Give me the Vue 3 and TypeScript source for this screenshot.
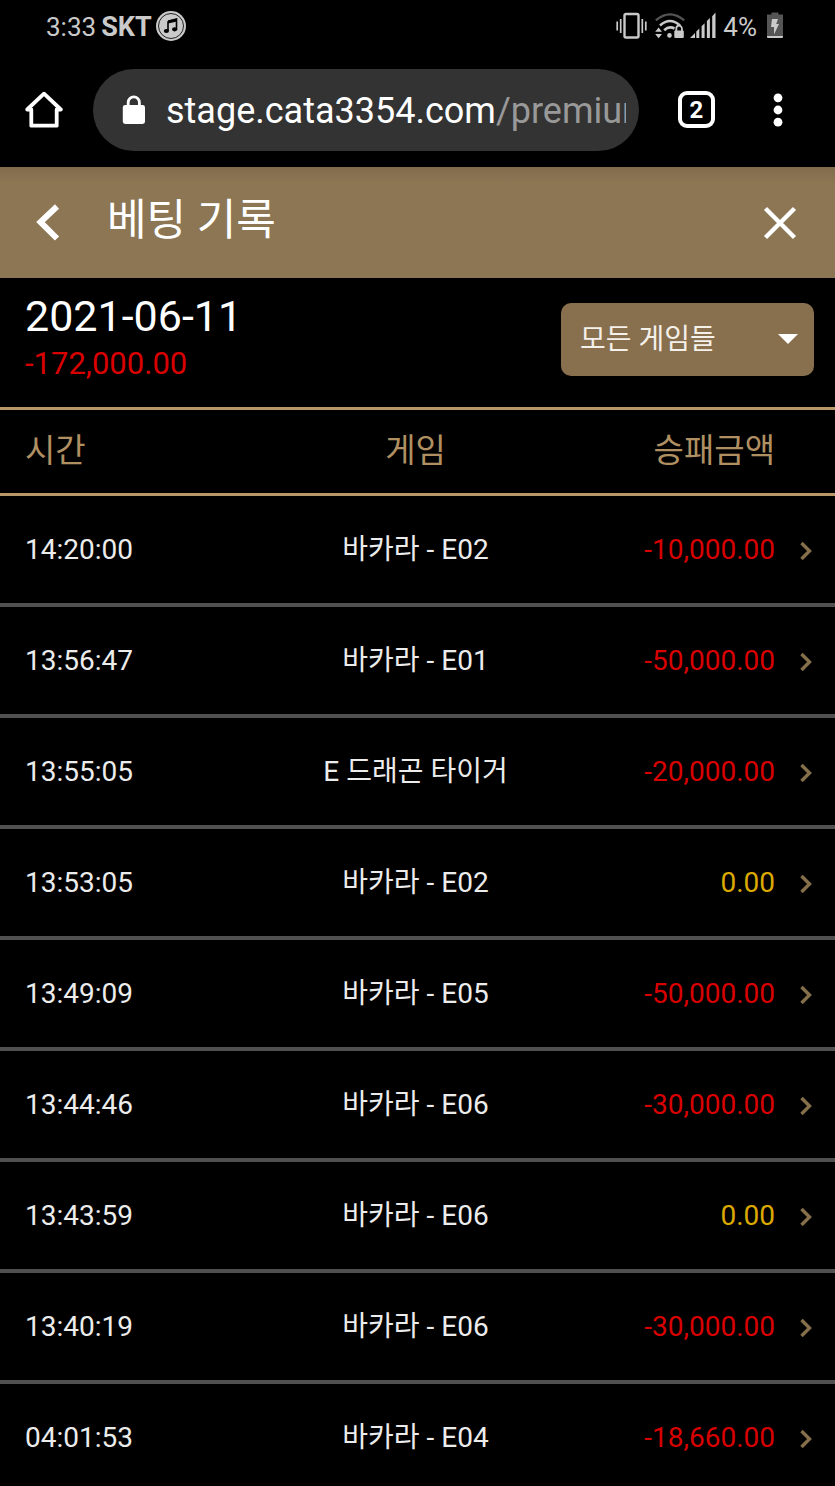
<script setup lang="ts">
import { ref } from 'vue'

interface Bet {
  time: string
  game: string
  result: string
}

const bets: Bet[] = [
  { time: '14:20:00', game: '바카라 - E02', result: '-10,000.00' },
  { time: '13:56:47', game: '바카라 - E01', result: '-50,000.00' },
  { time: '13:55:05', game: 'E 드래곤 타이거', result: '-20,000.00' },
  { time: '13:53:05', game: '바카라 - E02', result: '0.00' },
  { time: '13:49:09', game: '바카라 - E05', result: '-50,000.00' },
  { time: '13:44:46', game: '바카라 - E06', result: '-30,000.00' },
  { time: '13:43:59', game: '바카라 - E06', result: '0.00' },
  { time: '13:40:19', game: '바카라 - E06', result: '-30,000.00' },
  { time: '04:01:53', game: '바카라 - E04', result: '-18,660.00' },
]

const filter = ref('all')
</script>

<template>
  <div class="screen">
    <div class="status">
      <div class="status-group">
        <span class="clock">3:33</span>
        <strong class="carrier">SKT</strong>
        <svg class="music" width="30" height="30" viewBox="0 0 30 30" aria-hidden="true">
          <circle cx="15" cy="15" r="15" fill="#cacaca" />
          <circle cx="15" cy="15" r="12.5" fill="none" stroke="#222" stroke-width="1" />
          <path d="M12 10.2 20.5 8v10.5M12 10.2V20" fill="none" stroke="#000" stroke-width="1.6" />
          <path d="M12 9.5 21 7.5v3L12 12.5z" fill="#000" />
          <ellipse cx="10.4" cy="20" rx="2.6" ry="2.1" fill="#000" />
          <ellipse cx="18.6" cy="18.3" rx="2.6" ry="2.1" fill="#000" />
        </svg>
      </div>
      <div class="status-group">
        <svg class="vibrate" width="32" height="28" viewBox="0 0 32 28" aria-hidden="true">
          <rect x="8.5" y="2" width="14" height="23.5" rx="1.5" fill="none" stroke="#cacaca" stroke-width="2.4" />
          <path d="M1.2 9.5v9M4.7 7v14M26.3 7v14M29.8 9.5v9" stroke="#cacaca" stroke-width="1.7" />
        </svg>
        <svg class="wifi" width="30" height="28" viewBox="0 0 30 28" aria-hidden="true">
          <path d="M.8 8.4Q15-3.6 29.2 8.4" fill="none" stroke="#555" stroke-width="2.2" />
          <path d="M5 13.4Q15 4.6 25 13.4" fill="none" stroke="#cacaca" stroke-width="2.6" />
          <path d="M9.2 18.2Q14 13.6 19.5 16.5" fill="none" stroke="#cacaca" stroke-width="2.6" />
          <circle cx="14.5" cy="23.4" r="2.3" fill="#cacaca" />
          <path d="M3.6 15.5 7 19.7H.2zM3.6 26.2 7 22H.2z" fill="#cacaca" />
          <path d="M21.3 19v-2.5a2.8 2.8 0 0 1 5.6 0V19" fill="none" stroke="#cacaca" stroke-width="1.8" />
          <rect x="19.3" y="18.5" width="9.5" height="7.5" rx="1" fill="#cacaca" />
        </svg>
        <svg class="signal" width="26" height="28" viewBox="0 0 26 28" aria-hidden="true">
          <path d="M0 26 5 21v5zM6.3 19.5l3-3V26h-3zM11.6 14.2l3-3V26h-3zM16.9 8.9l3-3V26h-3zM22.2 4.3l3.3-3.8V26h-3.3z" fill="#cacaca" />
        </svg>
        <span class="percent">4%</span>
        <svg class="battery" width="16" height="28" viewBox="0 0 16 28" aria-hidden="true">
          <path d="M4.5.5h7v2H16V24H0V2.5h4.5z" fill="#555" />
          <path d="M0 24h16v1.2l-.8.8H.8L0 25.2z" fill="#cacaca" />
          <path d="M5 7h6l-1.8 5H12L7 22.5V15H4z" fill="#cacaca" />
        </svg>
      </div>
    </div>

    <div class="browser">
      <button class="icon-button" type="button" aria-label="Home">
        <svg width="38" height="38" viewBox="0 0 38 38" aria-hidden="true">
          <path d="M2.2 18.5 19 2.7l16.8 15.8H31.7V34.7H6.3V18.5z" fill="none" stroke="#fff" stroke-width="3.8" stroke-linejoin="round" />
        </svg>
      </button>
      <button class="address" type="button">
        <svg class="lock" width="24" height="30" viewBox="0 0 24 30" aria-hidden="true">
          <path d="M6.2 12V7.5a5.6 5.6 0 0 1 11.2 0V12" fill="none" stroke="#fff" stroke-width="2.8" />
          <rect x=".8" y="10" width="22.2" height="19" rx="2.4" fill="#fff" />
        </svg>
        <span class="url">stage.cata3354.com<span class="path">/premium</span></span>
      </button>
      <button class="tabs" type="button" aria-label="Tabs">2</button>
      <button class="icon-button more" type="button" aria-label="Menu">
        <svg width="10" height="34" viewBox="0 0 10 34" aria-hidden="true">
          <circle cx="5" cy="4.8" r="4.4" fill="#fff" />
          <circle cx="5" cy="17" r="4.4" fill="#fff" />
          <circle cx="5" cy="29.2" r="4.4" fill="#fff" />
        </svg>
      </button>
    </div>

    <header class="title-bar">
      <button class="icon-button" type="button" aria-label="뒤로">
        <svg width="24" height="38" viewBox="0 0 24 38" aria-hidden="true">
          <path d="M21 2.5 4.5 18 21 34.5" fill="none" stroke="#fff" stroke-width="6" />
        </svg>
      </button>
      <h1>베팅 기록</h1>
      <button class="icon-button" type="button" aria-label="닫기">
        <svg width="34" height="34" viewBox="0 0 34 34" aria-hidden="true">
          <path d="m2.5 2.5 29 29M31.5 2.5l-29 29" stroke="#fff" stroke-width="4.4" />
        </svg>
      </button>
    </header>

    <main>
      <section class="summary">
        <div>
          <div class="date">2021-06-11</div>
          <div class="total">-172,000.00</div>
        </div>
        <div class="filter">
          <select v-model="filter" aria-label="게임">
            <option value="all">모든 게임들</option>
          </select>
          <svg class="caret" width="20" height="10" viewBox="0 0 20 10" aria-hidden="true">
            <path d="M0 0h20L10 10z" fill="#fff" />
          </svg>
        </div>
      </section>

      <table>
        <thead>
          <tr>
            <th class="time" scope="col">시간</th>
            <th class="game" scope="col">게임</th>
            <th class="result" scope="col">승패금액</th>
            <td class="open"></td>
          </tr>
        </thead>
        <tbody>
          <tr v-for="bet in bets" :key="bet.time">
            <td class="time">{{ bet.time }}</td>
            <td class="game">{{ bet.game }}</td>
            <td class="result" :class="bet.result.startsWith('-') ? 'loss' : 'even'">{{ bet.result }}</td>
            <td class="open">
              <button class="icon-button" type="button" :aria-label="`${bet.time} 상세`">
                <svg width="12" height="20" viewBox="0 0 12 20" aria-hidden="true">
                  <path d="m1.5 3 8 8-8 8" fill="none" stroke="#86704c" stroke-width="3.4" />
                </svg>
              </button>
            </td>
          </tr>
        </tbody>
      </table>
    </main>
  </div>
</template>

<style>
body {
  margin: 0;
  background: #000;
}
</style>

<style scoped>
.screen {
  min-height: 100vh;
  overflow: hidden;
  background: #000;
  color: #ececec;
  font-family: Roboto, "Noto Sans CJK KR", sans-serif;
  font-size: 28px;
  line-height: 40px;
}

button {
  margin: 0;
  padding: 0;
  border: 0;
  background: none;
  color: inherit;
  font: inherit;
}

svg {
  display: block;
  flex: none;
}

.icon-button {
  display: block;
  flex: none;
}

.status {
  display: flex;
  justify-content: space-between;
  height: 52px;
  padding: 0 52px 0 46px;
  color: #cacaca;
  font-size: 26px;
}

.status-group {
  display: flex;
  align-items: center;
}

.clock,
.carrier,
.percent {
  padding-top: 2px;
}

.carrier {
  margin: 0 4px 0 5px;
  font-size: 27px;
}

.wifi {
  margin-left: 7px;
}

.signal {
  margin-left: 5px;
}

.percent {
  margin: 0 10px 0 7px;
}

.browser {
  display: flex;
  align-items: center;
  height: 115px;
  padding: 0 52px 0 25px;
  box-sizing: border-box;
}

.address {
  display: flex;
  flex: 1;
  align-items: center;
  min-width: 0;
  height: 82px;
  margin: 0 39px 0 30px;
  padding: 0 13px 0 29px;
  border-radius: 41px;
  background: #333;
  color: #fff;
  font-size: 36px;
}

.url {
  flex: 1;
  min-width: 0;
  margin-left: 20px;
  padding-top: 2px;
  overflow: hidden;
  text-align: left;
  white-space: nowrap;
}

.path {
  color: #999;
}

.tabs {
  width: 37px;
  height: 37px;
  border: 4px solid #fff;
  border-radius: 9px;
  color: #fff;
  font-size: 24px;
  font-weight: 700;
  line-height: 28px;
}

.more {
  margin-left: 58px;
}

.title-bar {
  display: flex;
  align-items: center;
  height: 111px;
  padding: 0 38px 0 36px;
  background: linear-gradient(#806b4c, #8c7654 16px);
}

h1 {
  flex: 1;
  margin: 0 0 0 47px;
  padding-bottom: 6px;
  color: #fff;
  font-size: 43px;
  font-weight: 400;
  line-height: 60px;
}

.summary {
  display: flex;
  align-items: flex-start;
  justify-content: space-between;
  padding: 12px 21px 22px 25px;
}

.date {
  color: #fff;
  font-size: 43px;
  line-height: 53px;
}

.total {
  color: #d80000;
  font-size: 31px;
  line-height: 42px;
}

.filter {
  position: relative;
  margin-top: 13px;
}

select {
  display: block;
  width: 253px;
  height: 73px;
  padding: 0 44px 0 19px;
  border: 0;
  border-radius: 10px;
  background: #886f4d;
  color: #f4f0ea;
  font: inherit;
  appearance: none;
}

.caret {
  position: absolute;
  top: 31px;
  right: 16px;
  pointer-events: none;
}

table {
  width: 100%;
  border-collapse: separate;
  border-spacing: 0;
  table-layout: fixed;
}

th,
td {
  box-sizing: border-box;
  padding: 0;
}

thead th,
thead td {
  height: 89px;
  padding-bottom: 2px;
  border-top: 3px solid #b89868;
  border-bottom: 3px solid #b89868;
  color: #b09062;
  font-size: 33px;
  font-weight: 400;
}

tbody td {
  height: 111px;
  border-bottom: 4px solid #505050;
}

.time {
  width: 30%;
  padding-left: 25px;
  text-align: left;
}

.game {
  width: 40%;
  padding-right: 4px;
  text-align: center;
}

.result {
  text-align: right;
}

.open {
  width: 60px;
  padding-left: 25px;
}

.loss {
  color: #d80000;
}

.even {
  color: #dba900;
}
</style>
